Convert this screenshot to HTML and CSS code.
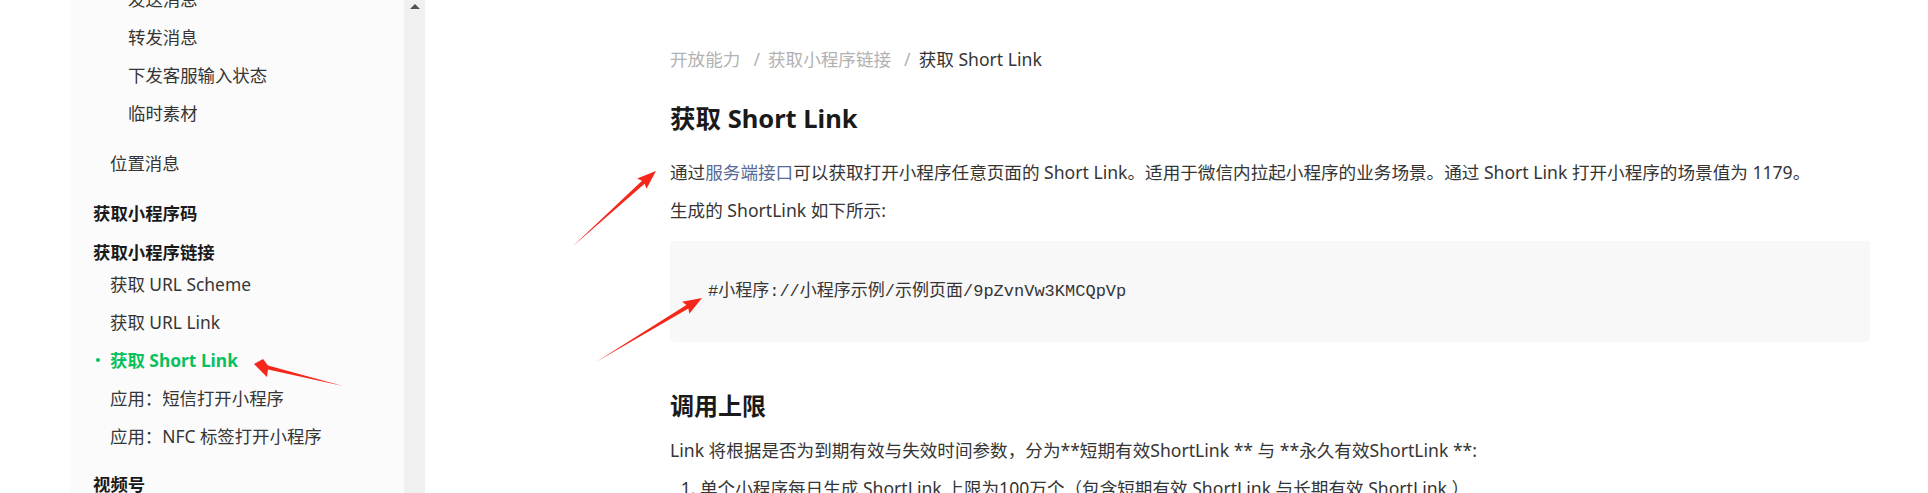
FILE: index.html
```html
<!DOCTYPE HTML>
<html>

<head>
    <meta charset="utf-8">
    <link rel="stylesheet" href="styles.css">
</head>

<body>
    <div class="sidebar">
        <div class="nav">
            <div class="nav-sub3">
                <div class="item3">发送消息</div>
                <div class="item3">转发消息</div>
                <div class="item3">下发客服输入状态</div>
                <div class="item3">临时素材</div>
            </div>
            <div class="item2">位置消息</div>

            <div class="group">
                <div class="group-title">获取小程序码</div>
            </div>

            <div class="group">
                <div class="group-title">获取小程序链接</div>
                <div class="group-list">
                    <div class="item2">获取 URL Scheme</div>
                    <div class="item2">获取 URL Link</div>
                    <div class="item2 active">获取 Short Link</div>
                    <div class="item2">应用：短信打开小程序</div>
                    <div class="item2">应用：NFC 标签打开小程序</div>
                </div>
            </div>

            <div class="group last">
                <div class="group-title">视频号</div>
            </div>
        </div>
    </div>
    <div class="scrollbar">
        <div class="sb-up"></div>
    </div>

    <div class="main">
        <div class="breadcrumb">
            <span class="crumb">开放能力</span><span class="sep">/</span><span class="crumb">获取小程序链接</span><span class="sep">/</span><span class="crumb current">获取 Short Link</span>
        </div>

        <h1 class="title">获取 Short Link</h1>

        <p class="text">通过<a class="link">服务端接口</a>可以获取打开小程序任意页面的 Short Link。适用于微信内拉起小程序的业务场景。通过 Short Link 打开小程序的场景值为 1179。</p>
        <p class="text">生成的 ShortLink 如下所示:</p>

        <pre class="code">#小程序://小程序示例/示例页面/9pZvnVw3KMCQpVp</pre>

        <h2 class="subtitle">调用上限</h2>
        <p class="text">Link 将根据是否为到期有效与失效时间参数，分为**短期有效ShortLink ** 与 **永久有效ShortLink **:</p>
        <ol class="list">
            <li>单个小程序每日生成 ShortLink 上限为100万个（包含短期有效 ShortLink 与长期有效 ShortLink ）</li>
        </ol>
    </div>

    <!-- red annotation arrows drawn over the page -->
    <svg class="marks" width="1928" height="493" viewBox="0 0 1928 493">
        <polygon points="572,247 644.6,183.8 646.5,188.8 656,171 637.1,178.4 642,180.8" />
        <polygon points="596,362 688.4,308.4 689.3,313.7 702,298 682.1,301.7 686.4,305" />
        <polygon points="343,386 268,369.5 267,377 254,364 263,359 268,365.5" />
    </svg>
</body>

</html>
```

FILE: styles.css
```css
html,
body {
    margin: 0;
    padding: 0;
}

body {
    display: flex;
    height: 493px;
    overflow: hidden;
    background: #ffffff;
    font-family: "Noto Sans", "Noto Sans CJK SC", sans-serif;
    font-size: 17.6px;
    color: #353535;
}

.sidebar {
    margin-left: 70px;
    width: 334px;
    flex: none;
    background: #fbfbfb;
    overflow: hidden;
}

.nav {
    margin-top: -20px;
    padding-left: 23px;
    font-size: 17.4px;
}

.item3 {
    height: 38px;
    line-height: 38px;
    padding-left: 35px;
    white-space: nowrap;
}

.nav-sub3 {
    margin-bottom: 12px;
}

.item2 {
    position: relative;
    height: 38px;
    line-height: 38px;
    padding-left: 17px;
    white-space: nowrap;
}

.item2.active {
    color: #07c160;
    font-weight: bold;
}

.item2.active::before {
    content: "";
    position: absolute;
    left: 3px;
    top: 17px;
    width: 4px;
    height: 4px;
    border-radius: 50%;
    background: #07c160;
}

.group {
    margin-top: 18px;
}

.group + .group {
    margin-top: 13px;
}

.group.last {
    margin-top: 16px;
}

.group-title {
    height: 26px;
    line-height: 26px;
    font-weight: bold;
    color: #1a1a1a;
    white-space: nowrap;
}

.group-list {
    margin-bottom: 5px;
}

.scrollbar {
    width: 21px;
    flex: none;
    background: #f0f0f0;
}

.sb-up {
    width: 0;
    height: 0;
    margin: 4px auto 0;
    border-left: 5px solid transparent;
    border-right: 5px solid transparent;
    border-bottom: 5px solid #505050;
}

.main {
    flex: 1;
    padding: 47px 58px 0 245px;
    min-width: 0;
}

.breadcrumb {
    line-height: 24px;
    height: 24px;
    white-space: nowrap;
}

.crumb {
    color: #b2b2b2;
}

.crumb.current {
    color: #353535;
}

.sep {
    color: #b2b2b2;
    margin: 0 8px 0 13px;
}

.title {
    margin: 28px 0 20px;
    font-size: 25.5px;
    line-height: 38px;
    color: #1a1a1a;
}

.text {
    margin: 0 0 8px;
    line-height: 30px;
    white-space: nowrap;
}

.link {
    color: #576b95;
    text-decoration: none;
}

.code {
    margin: 16px 0 0;
    padding: 40px 38px;
    background: #f8f8f8;
    border-radius: 4px;
    font-family: "Liberation Mono", "Noto Sans CJK SC", monospace;
    font-size: 17px;
    line-height: 21px;
    color: #353535;
}

.subtitle {
    margin: 47px 0 12px;
    font-size: 24px;
    line-height: 34px;
    color: #1a1a1a;
}

.list {
    margin: 0;
    padding-left: 30px;
    line-height: 30px;
    white-space: nowrap;
}

.marks {
    position: absolute;
    left: 0;
    top: 0;
    pointer-events: none;
}

.marks polygon {
    fill: #f5261a;
}
```
